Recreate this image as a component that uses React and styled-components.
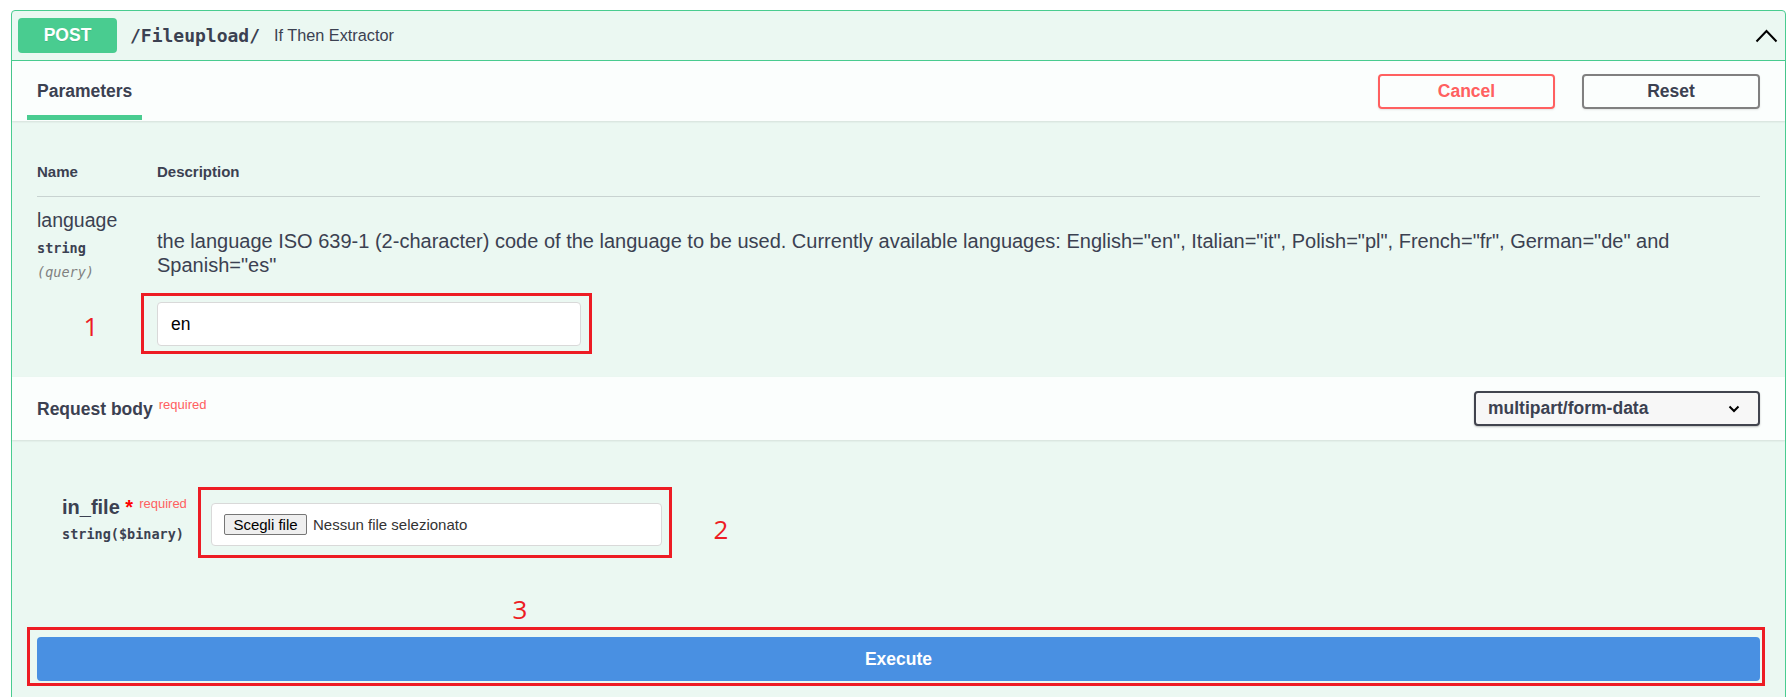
import React from "react";
import styled, { createGlobalStyle } from "styled-components";

const GlobalStyle = createGlobalStyle`
  html, body { margin: 0; padding: 0; background: #fff; }
  body { font-family: "Liberation Sans", Arial, sans-serif; color: #3b4151; }
  * { box-sizing: border-box; }
`;

const Opblock = styled.section`
  margin: 10px 0 0 11px;
  border: 1px solid #49cc90;
  border-radius: 4px;
  background: #ebf8f2;
`;

const Summary = styled.div`
  display: flex;
  align-items: center;
  padding: 7px 7px 7px 6px;
  border-bottom: 1px solid #49cc90;
`;

const MethodBadge = styled.span`
  display: flex;
  align-items: center;
  justify-content: center;
  width: 99px;
  height: 35px;
  border-radius: 4px;
  background: #49cc90;
  color: #fff;
  font-weight: 700;
  font-size: 17.5px;
  text-shadow: 0 1px 0 rgba(0, 0, 0, 0.1);
`;

const PathText = styled.span`
  margin-left: 13px;
  font-family: "DejaVu Sans Mono", "Liberation Mono", monospace;
  font-weight: 700;
  font-size: 18px;
  color: #3b4151;
`;

const SummaryDesc = styled.span`
  margin-left: 14px;
  font-size: 16.25px;
  color: #3b4151;
  flex: 1;
`;

const Chevron = styled.svg`
  display: block;
  flex: none;
`;

const SectionHeader = styled.div`
  display: flex;
  align-items: center;
  justify-content: space-between;
  min-height: ${(p) => p.$h}px;
  padding: 0 25px;
  background: rgba(255, 255, 255, 0.8);
  box-shadow: 0 1px 2px rgba(0, 0, 0, 0.1);
`;

const Tab = styled.h4`
  position: relative;
  margin: 0;
  font-size: 17.5px;
  line-height: 20px;
  font-weight: 700;
  color: #3b4151;
  &::after {
    content: "";
    position: absolute;
    left: -10px;
    right: -10px;
    top: calc(100% + 14px);
    height: 5px;
    background: #49cc90;
  }
`;

const ButtonGroup = styled.div`
  display: flex;
  gap: 27px;
`;

const OutlineButton = styled.button`
  width: ${(p) => p.$w}px;
  height: 35px;
  border: 2px solid ${(p) => p.$border};
  border-radius: 4px;
  background: transparent;
  color: ${(p) => p.$color};
  font-family: inherit;
  font-weight: 700;
  font-size: 17.5px;
  box-shadow: 0 1px 2px rgba(0, 0, 0, 0.1);
  cursor: pointer;
`;

const ParamsSection = styled.div`
  padding: 42px 25px 31px;
`;

const ParamsHead = styled.div`
  display: grid;
  grid-template-columns: 120px 1fr;
  padding-bottom: 15px;
  border-bottom: 1px solid rgba(59, 65, 81, 0.2);
  font-size: 15px;
  line-height: 18px;
  font-weight: 700;
`;

const ParamRow = styled.div`
  display: grid;
  grid-template-columns: 120px 1fr;
  padding-top: 12px;
`;

const NameCell = styled.div`
  display: flex;
  flex-direction: column;
  align-items: flex-start;
`;

const ParamName = styled.div`
  font-size: 19.5px;
  line-height: 22px;
`;

const MonoType = styled.div`
  margin-top: ${(p) => p.$mt}px;
  font-family: "DejaVu Sans Mono", "Liberation Mono", monospace;
  font-weight: 700;
  font-size: 13.5px;
  line-height: 24px;
  color: #3b4151;
`;

const ParamIn = styled.div`
  font-family: "DejaVu Sans Mono", "Liberation Mono", monospace;
  font-style: italic;
  font-size: 13.5px;
  line-height: 24px;
  color: #808080;
`;

const DescCell = styled.div`
  display: flex;
  flex-direction: column;
  align-items: flex-start;
`;

const DescText = styled.p`
  margin: 20px 0 25px;
  font-size: 20px;
  line-height: 24px;
  color: #3b4151;
`;

const Annotated = styled.div`
  position: relative;
  display: ${(p) => (p.$block ? "block" : "inline-block")};
`;

const RedFrame = styled.div`
  position: absolute;
  top: ${(p) => p.$t}px;
  left: ${(p) => p.$l}px;
  right: ${(p) => p.$r}px;
  bottom: ${(p) => p.$b}px;
  border: 3px solid #ed1c24;
  pointer-events: none;
`;

const Marker = styled.span`
  position: absolute;
  top: ${(p) => p.$t}px;
  left: ${(p) => p.$l}px;
  width: 30px;
  text-align: center;
  font-family: "Open Sans", "Noto Sans", sans-serif;
  font-size: 26px;
  line-height: 1;
  color: #ed1c24;
`;

const TextInput = styled.input`
  display: block;
  width: 424px;
  height: 44px;
  margin: 0;
  padding: 0 13px;
  border: 1px solid #d9d9d9;
  border-radius: 4px;
  background: #fff;
  font-family: "Liberation Sans", Arial, sans-serif;
  font-size: 17.5px;
  color: #000;
  outline: none;
`;

const HeaderTitle = styled.h4`
  margin: 0;
  font-size: 17.5px;
  line-height: 20px;
  font-weight: 700;
  color: #3b4151;
`;

const RequiredSup = styled.span`
  position: relative;
  top: ${(p) => p.$top}px;
  margin-left: ${(p) => p.$ml}px;
  font-size: 13px;
  line-height: 1;
  font-weight: 400;
  color: #ff6060;
`;

const SelectBox = styled.div`
  display: flex;
  align-items: center;
  justify-content: space-between;
  width: 286px;
  height: 35px;
  padding: 0 18px 0 12px;
  border: 2px solid #41444e;
  border-radius: 4px;
  background: #f7f7f7;
  box-shadow: 0 1px 2px rgba(0, 0, 0, 0.25);
  font-size: 17.5px;
  font-weight: 700;
  color: #3b4151;
`;

const BodySection = styled.div`
  padding: 55px 25px 25px;
`;

const FileRow = styled.div`
  display: grid;
  grid-template-columns: 149px 1fr;
  padding-left: 25px;
`;

const FileName = styled.div`
  font-size: 20px;
  line-height: 24px;
  font-weight: 700;
  color: #3b4151;
  white-space: nowrap;
`;

const Star = styled.span`
  color: #ff0000;
  font-size: 20px;
`;

const FileDesc = styled.div`
  padding-top: 8px;
`;

const FileInput = styled.div`
  display: flex;
  align-items: center;
  width: 451px;
  height: 43px;
  padding-left: 12px;
  border: 1px solid #d9d9d9;
  border-radius: 4px;
  background: #fff;
`;

const ChooseButton = styled.button`
  width: 83px;
  height: 21px;
  padding: 0;
  border: 1px solid #767676;
  border-radius: 2px;
  background: #efefef;
  font-family: "Liberation Sans", Arial, sans-serif;
  font-size: 15px;
  color: #000;
`;

const NoFile = styled.span`
  margin-left: 6px;
  font-size: 15px;
  color: #333;
`;

const ExecuteWrapper = styled.div`
  padding-top: 91px;
`;

const ExecuteButton = styled.button`
  display: block;
  width: 100%;
  height: 44px;
  border: none;
  border-radius: 4px;
  background: #4990e2;
  color: #fff;
  font-family: inherit;
  font-size: 17.5px;
  font-weight: 700;
  cursor: pointer;
`;

export default function App() {
  return (
    <>
      <GlobalStyle />
      <Opblock>
        <Summary>
          <MethodBadge>POST</MethodBadge>
          <PathText>/Fileupload/</PathText>
          <SummaryDesc>If Then Extractor</SummaryDesc>
          <Chevron width="23" height="14" viewBox="0 0 23 14">
            <path d="M1.5 12.5 L11.5 2 L21.5 12.5" fill="none" stroke="#000" strokeWidth="2" />
          </Chevron>
        </Summary>

        <SectionHeader $h={60}>
          <Tab>Parameters</Tab>
          <ButtonGroup>
            <OutlineButton $w={177} $border="#ff6060" $color="#ff6060">Cancel</OutlineButton>
            <OutlineButton $w={178} $border="#808080" $color="#3b4151">Reset</OutlineButton>
          </ButtonGroup>
        </SectionHeader>

        <ParamsSection>
          <ParamsHead>
            <div>Name</div>
            <div>Description</div>
          </ParamsHead>
          <ParamRow>
            <NameCell>
              <ParamName>language</ParamName>
              <MonoType $mt={5}>string</MonoType>
              <ParamIn>(query)</ParamIn>
            </NameCell>
            <DescCell>
              <DescText>
                the language ISO 639-1 (2-character) code of the language to be used. Currently available languages: English="en", Italian="it", Polish="pl", French="fr", German="de" and Spanish="es"
              </DescText>
              <Annotated>
                <TextInput defaultValue="en" />
                <RedFrame $t={-9} $l={-16} $r={-11} $b={-8} />
                <Marker $t={11} $l={-81}>1</Marker>
              </Annotated>
            </DescCell>
          </ParamRow>
        </ParamsSection>

        <SectionHeader $h={63}>
          <HeaderTitle>
            Request body
            <RequiredSup $top={-6} $ml={6}>required</RequiredSup>
          </HeaderTitle>
          <SelectBox>
            <span>multipart/form-data</span>
            <svg width="12" height="8" viewBox="0 0 12 8">
              <path d="M1.5 1.5 L6 6 L10.5 1.5" fill="none" stroke="#000" strokeWidth="2" />
            </svg>
          </SelectBox>
        </SectionHeader>

        <BodySection>
          <FileRow>
            <NameCell>
              <FileName>
                in_file<Star>&nbsp;*</Star>
                <RequiredSup $top={-6} $ml={6}>required</RequiredSup>
              </FileName>
              <MonoType $mt={3}>string($binary)</MonoType>
            </NameCell>
            <FileDesc>
              <Annotated>
                <FileInput>
                  <ChooseButton>Scegli file</ChooseButton>
                  <NoFile>Nessun file selezionato</NoFile>
                </FileInput>
                <RedFrame $t={-16} $l={-13} $r={-10} $b={-12} />
                <Marker $t={13} $l={495}>2</Marker>
              </Annotated>
            </FileDesc>
          </FileRow>
          <ExecuteWrapper>
            <Annotated $block>
              <ExecuteButton>Execute</ExecuteButton>
              <RedFrame $t={-10} $l={-10} $r={-5} $b={-5} />
              <Marker $t={-41} $l={468}>3</Marker>
            </Annotated>
          </ExecuteWrapper>
        </BodySection>
      </Opblock>
    </>
  );
}
